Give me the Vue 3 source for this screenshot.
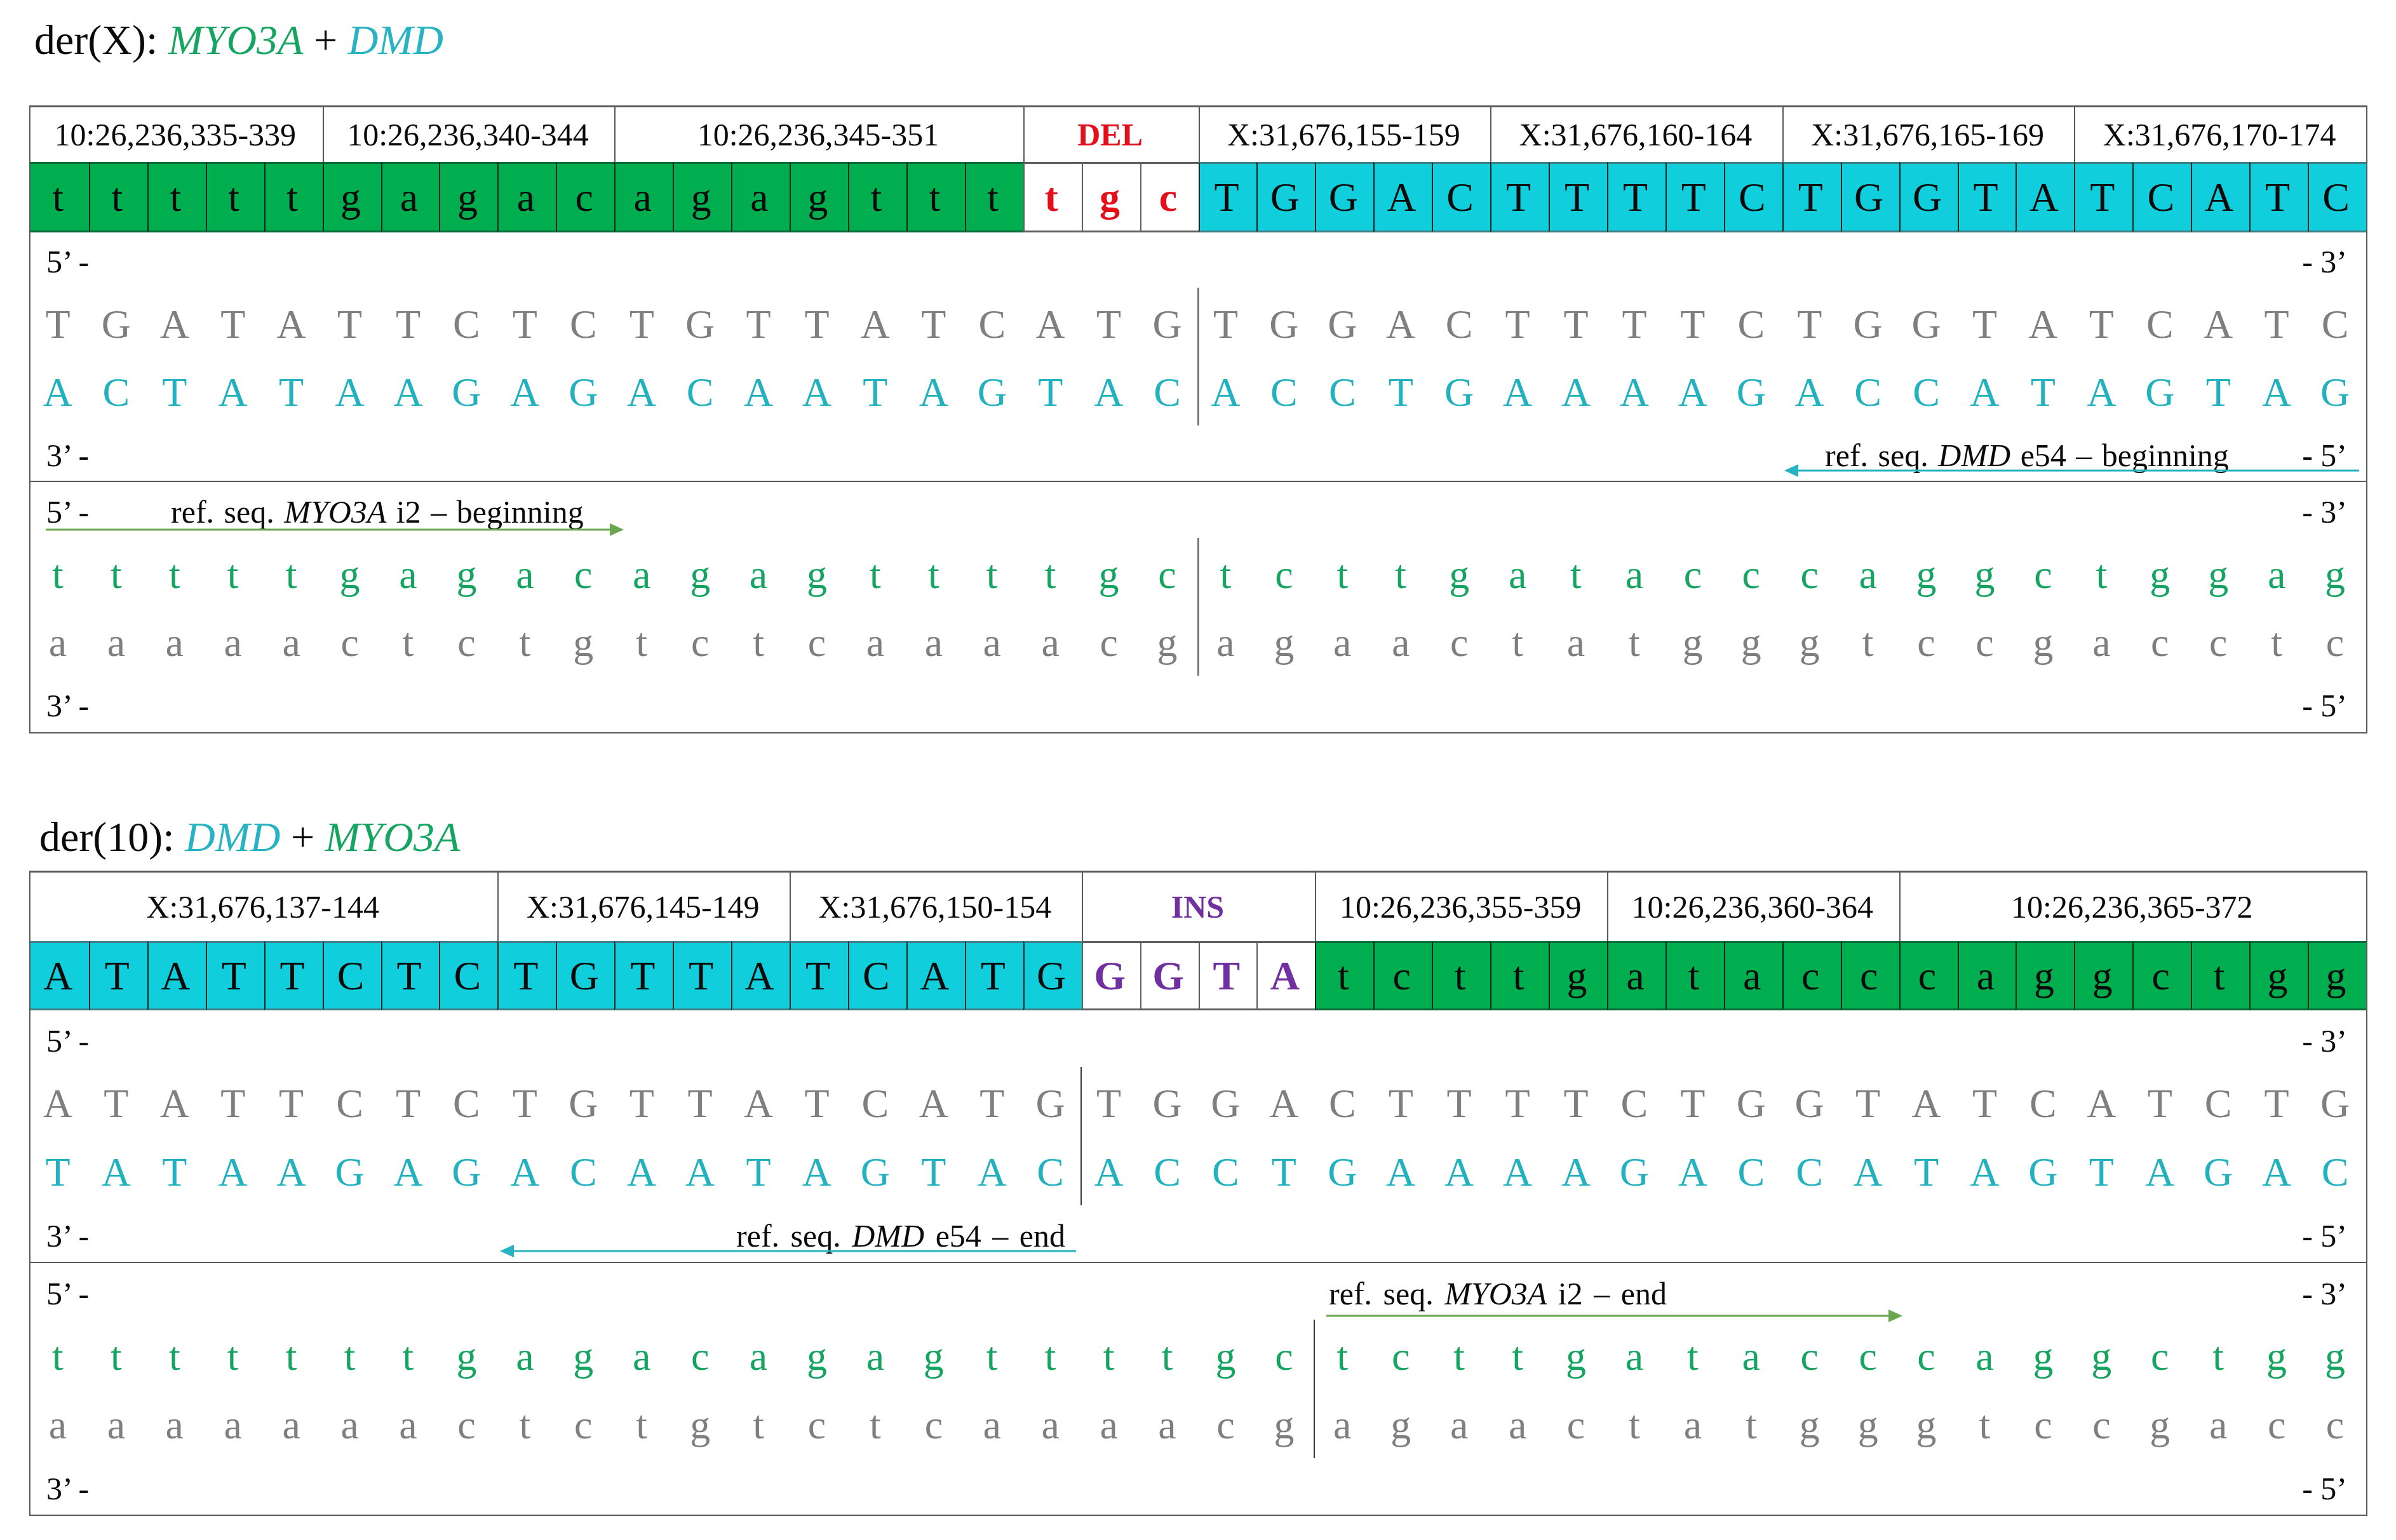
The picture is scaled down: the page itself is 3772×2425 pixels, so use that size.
<script setup>
const split = (segments) =>
  segments.flatMap((s) => [...s.text].map((ch) => ({ ch, kind: s.kind })))

const panels = [
  {
    id: 'x',
    titleClass: 'title-x',
    panelClass: 'panel-x',
    prefix: 'der(X): ',
    genes: [
      { name: 'MYO3A', cls: 'c-green' },
      { name: 'DMD', cls: 'c-cyan' },
    ],
    header: [
      { label: '10:26,236,335-339', span: 5 },
      { label: '10:26,236,340-344', span: 5 },
      { label: '10:26,236,345-351', span: 7 },
      { label: 'DEL', span: 3, cls: 'h-del' },
      { label: 'X:31,676,155-159', span: 5 },
      { label: 'X:31,676,160-164', span: 5 },
      { label: 'X:31,676,165-169', span: 5 },
      { label: 'X:31,676,170-174', span: 5 },
    ],
    seq: split([
      { text: 'tttttgagacagagttt', kind: 'green' },
      { text: 'tgc', kind: 'del' },
      { text: 'TGGACTTTTCTGGTATCATC', kind: 'cyan' },
    ]),
    strands: [
      {
        junction: 20,
        topColor: 'c-gray',
        bottomColor: 'c-base-cyan',
        top: 'TGATATTCTCTGTTATCATGTGGACTTTTCTGGTATCATC',
        bottom: 'ACTATAAGAGACAATAGTACACCTGAAAAGACCATAGTAG',
        tune: 's-a',
        ref: { where: 'bottom', pre: 'ref. seq. ', gene: 'DMD', post: ' e54 – beginning', offset: 2733 },
        arrow: { left: 2761, width: 905, top: 365, dir: 'left', color: '#27b3c0' },
      },
      {
        junction: 20,
        topColor: 'c-green',
        bottomColor: 'c-gray',
        top: 'tttttgagacagagttttgctcttgatacccaggctggag',
        bottom: 'aaaaactctgtctcaaaacgagaactatgggtccgacctc',
        tune: 's-b',
        ref: { where: 'top', pre: 'ref. seq. ', gene: 'MYO3A', post: ' i2 – beginning', offset: 129 },
        arrow: { left: 24, width: 910, top: 65, dir: 'right', color: '#6aa84f' },
      },
    ],
  },
  {
    id: 'ten',
    titleClass: 'title-ten',
    panelClass: 'panel-ten',
    prefix: 'der(10): ',
    genes: [
      { name: 'DMD', cls: 'c-cyan' },
      { name: 'MYO3A', cls: 'c-green' },
    ],
    header: [
      { label: 'X:31,676,137-144', span: 8 },
      { label: 'X:31,676,145-149', span: 5 },
      { label: 'X:31,676,150-154', span: 5 },
      { label: 'INS', span: 4, cls: 'h-ins' },
      { label: '10:26,236,355-359', span: 5 },
      { label: '10:26,236,360-364', span: 5 },
      { label: '10:26,236,365-372', span: 8 },
    ],
    seq: split([
      { text: 'ATATTCTCTGTTATCATG', kind: 'cyan' },
      { text: 'GGTA', kind: 'ins' },
      { text: 'tcttgatacccaggctgg', kind: 'green' },
    ]),
    strands: [
      {
        junction: 18,
        topColor: 'c-gray',
        bottomColor: 'c-base-cyan',
        top: 'ATATTCTCTGTTATCATGTGGACTTTTCTGGTATCATCTG',
        bottom: 'TATAAGAGACAATAGTACACCTGAAAAGACCATAGTAGAC',
        tune: 's-c',
        ref: { where: 'bottom', pre: 'ref. seq. ', gene: 'DMD', post: ' e54 – end', offset: 1019 },
        arrow: { left: 739, width: 907, top: 369, dir: 'left', color: '#27b3c0' },
      },
      {
        junction: 22,
        topColor: 'c-green',
        bottomColor: 'c-gray',
        top: 'tttttttgagacagagttttgctcttgatacccaggctgg',
        bottom: 'aaaaaaactctgtctcaaaacgagaactatgggtccgacc',
        tune: 's-c',
        ref: { where: 'top', pre: 'ref. seq. ', gene: 'MYO3A', post: ' i2 – end', offset: 1952 },
        arrow: { left: 2040, width: 907, top: 73, dir: 'right', color: '#6aa84f' },
      },
    ],
  },
]
</script>

<template>
  <main class="page">
    <section v-for="p in panels" :key="p.id" class="figure">
      <h2 class="title" :class="p.titleClass">
        {{ p.prefix }}<i :class="p.genes[0].cls">{{ p.genes[0].name }}</i> + <i :class="p.genes[1].cls">{{ p.genes[1].name }}</i>
      </h2>
      <div class="panel" :class="p.panelClass">
        <div class="grid header">
          <div
            v-for="h in p.header"
            :key="h.label"
            class="hcell"
            :class="h.cls"
            :style="{ gridColumn: 'span ' + h.span }"
          >{{ h.label }}</div>
        </div>
        <div class="grid seq">
          <div v-for="(c, i) in p.seq" :key="i" class="cell" :class="'k-' + c.kind">{{ c.ch }}</div>
        </div>
        <div
          v-for="(s, si) in p.strands"
          :key="si"
          class="strand"
          :class="[s.tune, { ruled: si === 0 }]"
        >
          <svg
            class="arrow"
            :style="{ left: s.arrow.left + 'px', top: s.arrow.top + 'px', width: s.arrow.width + 'px' }"
            :viewBox="`0 0 ${s.arrow.width} 20`"
            height="20"
          >
            <line
              :x1="s.arrow.dir === 'left' ? 16 : 0"
              y1="10"
              :x2="s.arrow.dir === 'left' ? s.arrow.width : s.arrow.width - 16"
              y2="10"
              :stroke="s.arrow.color"
              stroke-width="3"
            />
            <polygon
              :points="s.arrow.dir === 'left'
                ? '0,10 22,0 22,20'
                : `${s.arrow.width},10 ${s.arrow.width - 22},0 ${s.arrow.width - 22},20`"
              :fill="s.arrow.color"
            />
          </svg>
          <div class="end first-end">
            <span>5’ -</span>
            <span v-if="s.ref.where === 'top'" class="ref" :style="{ marginLeft: s.ref.offset + 'px' }">{{ s.ref.pre }}<i>{{ s.ref.gene }}</i>{{ s.ref.post }}</span>
            <span class="right-label">- 3’</span>
          </div>
          <div class="pair">
            <div class="grid bases" :class="s.topColor">
              <span v-for="(ch, i) in s.top" :key="i">{{ ch }}</span>
            </div>
            <div class="grid bases second" :class="s.bottomColor">
              <span v-for="(ch, i) in s.bottom" :key="i">{{ ch }}</span>
            </div>
            <div class="junction" :style="{ left: (s.junction * 100) / 40 + '%' }"></div>
          </div>
          <div class="end last-end">
            <span>3’ -</span>
            <span v-if="s.ref.where === 'bottom'" class="ref" :style="{ marginLeft: s.ref.offset + 'px' }">{{ s.ref.pre }}<i>{{ s.ref.gene }}</i>{{ s.ref.post }}</span>
            <span class="right-label">- 5’</span>
          </div>
        </div>
      </div>
    </section>
  </main>
</template>

<style>
html, body { background: #ffffff; }
</style>

<style scoped>
.page {
  width: 3772px;
  box-sizing: border-box;
  padding: 23px 0 0 46px;
  font-family: "Liberation Serif", "Times New Roman", serif;
  color: #0a0a0a;
}
.figure + .figure { margin-top: 123px; }

.title {
  margin: 0;
  font-size: 66px;
  font-weight: 400;
  line-height: 80px;
  white-space: pre-wrap;
}
.title-x { padding-left: 8px; margin-bottom: 63px; }
.title-ten { padding-left: 16px; margin-bottom: 13px; }

.c-green { color: #16a560; }
.c-cyan { color: #27b3c4; }
.c-gray { color: #7f7f7f; }
.c-base-cyan { color: #22b2bf; }

.panel {
  position: relative;
  width: 3681px;
  box-sizing: border-box;
  border: 2px solid #5a5a5a;
  border-top-width: 3px;
}

.grid {
  display: grid;
  grid-template-columns: repeat(40, 1fr);
}

.header { height: 86px; }
.panel-ten .header { height: 108px; }
.hcell {
  display: flex;
  align-items: center;
  justify-content: center;
  font-size: 50px;
  border-left: 2px solid #5a5a5a;
  box-sizing: border-box;
  padding-right: 4px;
}
.hcell:first-child { border-left: none; }
.h-del { color: #e3101c; font-weight: 700; }
.h-ins { color: #7030a0; font-weight: 700; }

.seq { height: 111px; }
.panel-ten .seq { height: 109px; }
.cell {
  display: flex;
  align-items: center;
  justify-content: center;
  font-size: 64px;
  box-sizing: border-box;
  padding-right: 5px;
  border-left: 2px solid #06251c;
  border-top: 3px solid #2b4a3c;
  border-bottom: 3px solid #2b4a3c;
}
.cell:first-child { border-left: none; }
.k-green { background: #00ad4f; border-top-color: #0a6b3a; border-bottom-color: #0a6b3a; }
.k-cyan { background: #10cedc; border-top-color: #3f7f86; border-bottom-color: #3f7f86; }
.k-del {
  background: #fff;
  color: #e3101c;
  font-weight: 700;
  border-color: #5f5f5f;
}
.k-ins {
  background: #fff;
  color: #7030a0;
  font-weight: 700;
  border-color: #5f5f5f;
}

.strand {
  position: relative;
  padding: 18px 0 11px;
}
.strand.ruled { border-bottom: 2px solid #5a5a5a; }
.arrow { position: absolute; display: block; overflow: visible; }

.end {
  display: flex;
  height: 60px;
  line-height: 60px;
  font-size: 50px;
  padding: 0 30px 0 25px;
  white-space: pre;
}
.right-label { margin-left: auto; }
.ref { word-spacing: 3px; }
.s-c .ref { word-spacing: 5px; }

.pair { position: relative; margin-top: 19px; }
.bases {
  height: 100px;
  line-height: 100px;
  font-size: 64px;
  text-align: center;
}
.bases span { padding-right: 6px; }
.second { margin-top: 8px; }
.last-end { margin-top: 20px; }

.junction {
  position: absolute;
  top: -8px;
  bottom: -2px;
  width: 3px;
  margin-left: -2px;
  background: #777777;
}
.panel-ten .junction { width: 2px; background: #3a3a3a; }

.s-a { padding: 16px 0 10px; }
.s-a .second { margin-top: 7px; }
.s-a .last-end { margin-top: 19px; }
.s-b { padding: 17px 0 12px; }
.s-b .second { margin-top: 7px; }
.s-b .last-end { margin-top: 19px; }
</style>
